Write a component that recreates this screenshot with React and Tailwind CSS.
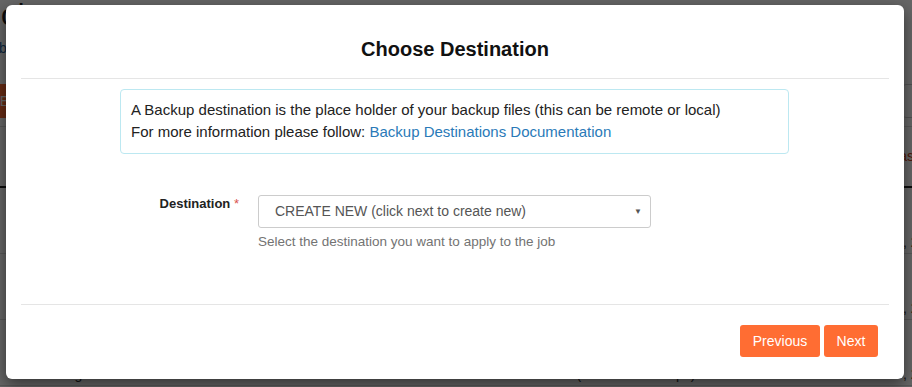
import React from 'react';

const rows = [
  { dest: '', type: '', name: '', owner: '', date: 'Jul 1, 2019' },
  { dest: '', type: '', name: '', owner: '', date: 'Jul 9, 2019' },
  { dest: 'GoogleDrive', type: 'Full Account Archived', name: 'test (Retain 1 Backups)', owner: 'Scotttest', date: 'Jul 9, 2019' },
];

const Page = () => (
  <div className="h-[387px] bg-white text-[#333] overflow-hidden" style={{ fontFamily: '"Liberation Sans", Arial, sans-serif' }}>
    <div className="text-[30px] leading-[30px] -ml-[14px] text-[#222]">Jobs</div>
    <div className="text-[14px] mt-[8px] -ml-[1px] text-[#1f5f9a]">backup jobs</div>
    <div className="mt-[25px] flex items-center justify-between h-[34px]">
      <div className="bg-[#ff6d33] text-white text-[14px] h-[34px] w-[70px] -ml-[60px] flex items-center justify-end pr-[1px]">E</div>
      <div className="border border-[#ccc] h-[34px] w-[200px] -mr-[190px] rounded" />
    </div>
    <div className="mt-[8px] border-t border-[#ddd] h-[60px] flex items-center justify-end">
      <span className="text-[#c8431a] text-[14px] -mr-[6px]">Last</span>
    </div>
    <div className="border-t-2 border-[#222]" />
    {rows.map((r, i) => (
      <div key={i} className="h-[66px] border-b border-[#ddd] flex items-end text-[14px]">
        <span className="w-[240px] pl-[48px]">{r.dest}</span>
        <span className="w-[310px]">{r.type}</span>
        <span className="w-[190px]">{r.name}</span>
        <span className="flex-1">{r.owner}</span>
        <span className="-mr-[30px]">{r.date}</span>
      </div>
    ))}
  </div>
);

const App = () => {
  return (
    <div className="relative w-[912px] h-[387px] overflow-hidden" style={{ fontFamily: '"Liberation Sans", Arial, sans-serif' }}>
      <Page />
      {/* backdrop */}
      <div className="absolute inset-0 bg-black/60" />

      {/* modal */}
      <div className="absolute left-[6px] top-[5px] w-[898px] h-[374px] bg-white rounded-[6px] shadow-[0_5px_15px_rgba(0,0,0,0.5)] flex flex-col">
        <div className="mx-[15px] h-[74px] border-b border-[#e5e5e5] flex items-center justify-center pt-[14px]">
          <h4 className="text-[20px] font-bold text-[#111]">Choose Destination</h4>
        </div>

        <div className="h-[226px] border-b border-[#e5e5e5] mx-[15px] pt-[10px]">
          <div className="ml-[99px] w-[669px] h-[65px] border border-[#bce8f1] rounded-[4px] px-[10px] pt-[9px] text-[15px] leading-[22px] text-[#222]">
            <div>A Backup destination is the place holder of your backup files (this can be remote or local)</div>
            <div>
              For more information please follow:{' '}
              <a className="text-[#2a7ab8]">Backup Destinations Documentation</a>
            </div>
          </div>

          <div className="mt-[41px] flex">
            <div className="w-[230px] text-right pt-[1px] text-[13px] font-bold text-[#222] leading-[16px] pr-[12px]">
              Destination <span className="text-[#d9534f] font-normal">*</span>
            </div>
            <div className="ml-[7px]">
              <div className="w-[393px] h-[33px] border border-[#ccc] rounded-[3px] flex items-center justify-between pl-[16px] pr-[8px] text-[14px] text-[#555]">
                <span>CREATE NEW (click next to create new)</span>
                <span className="text-[8px] text-[#555]">▼</span>
              </div>
              <div className="mt-[6px] text-[13.5px] text-[#737373] leading-[16px]">
                Select the destination you want to apply to the job
              </div>
            </div>
          </div>
        </div>

        <div className="flex-1 flex justify-end items-start pt-[20px] pr-[26px] gap-[4px]">
          <button className="h-[32px] w-[80px] bg-[#ff6d33] text-white text-[14px] rounded-[3px]">Previous</button>
          <button className="h-[32px] w-[54px] bg-[#ff6d33] text-white text-[14px] rounded-[3px]">Next</button>
        </div>
      </div>
    </div>
  );
};

export default App;
